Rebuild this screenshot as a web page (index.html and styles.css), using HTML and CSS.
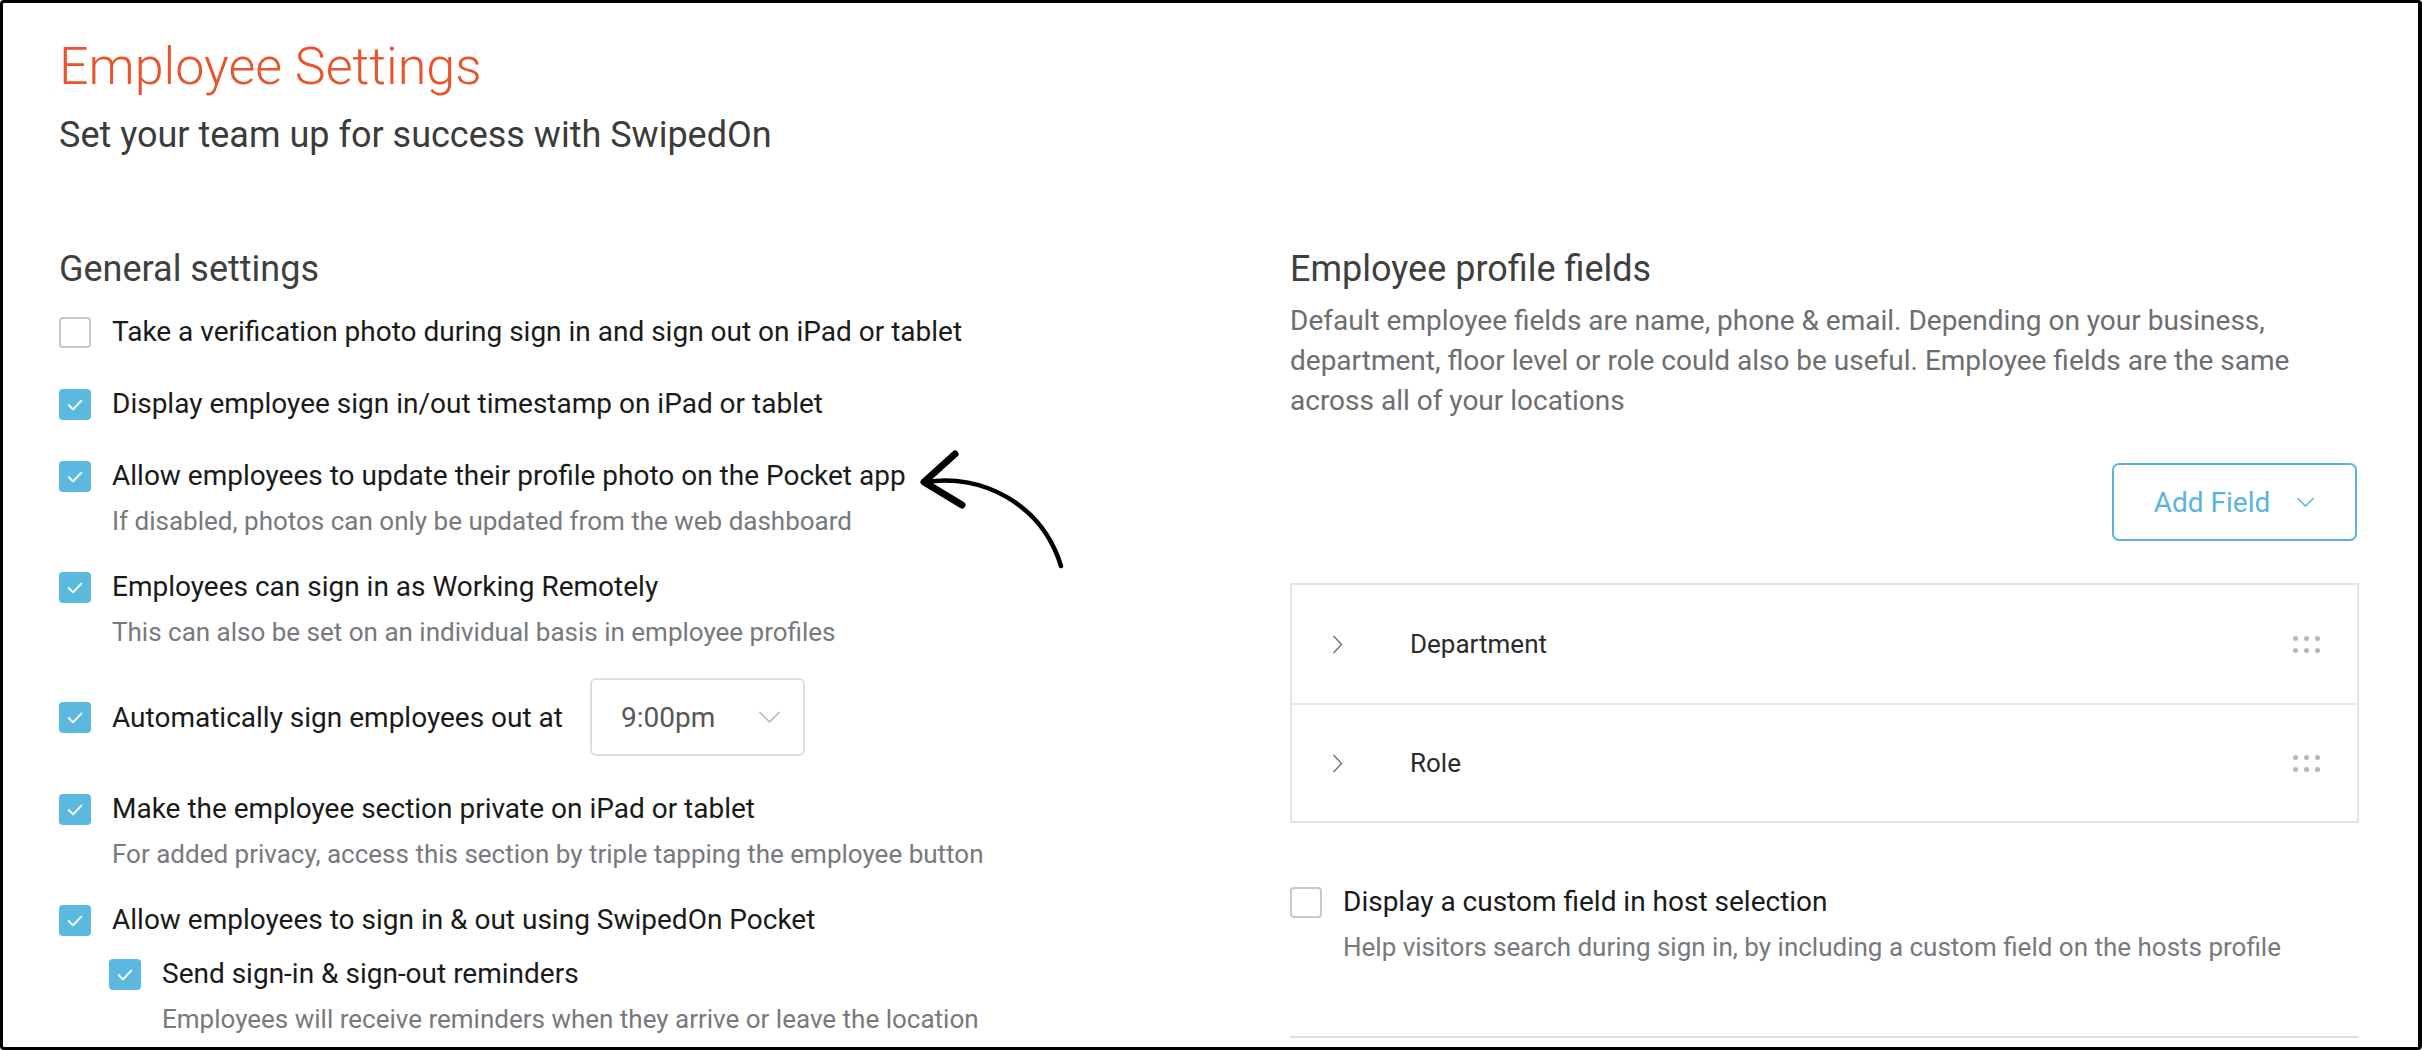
FILE: index.html
```html
<!DOCTYPE html>
<html lang="en">
<head>
<meta charset="utf-8">
<title>Employee Settings</title>
<link rel="stylesheet" href="styles.css">
</head>
<body>
<div class="frame">
  <header class="page-head">
    <h1 class="title">Employee Settings</h1>
    <p class="subtitle">Set your team up for success with SwipedOn</p>
  </header>

  <div class="columns">
    <section class="col-left">
      <h2 class="section-title">General settings</h2>
      <ul class="settings">
        <li class="setting">
          <div class="setting-row"><span class="cb"></span><span class="label">Take a verification photo during sign in and sign out on iPad or tablet</span></div>
        </li>
        <li class="setting">
          <div class="setting-row"><span class="cb checked"><svg viewBox="0 0 32 32"><polyline points="9.5,16.5 14,21 22.5,12"/></svg></span><span class="label">Display employee sign in/out timestamp on iPad or tablet</span></div>
        </li>
        <li class="setting">
          <div class="setting-row"><span class="cb checked"><svg viewBox="0 0 32 32"><polyline points="9.5,16.5 14,21 22.5,12"/></svg></span><span class="label">Allow employees to update their profile photo on the Pocket app</span></div>
          <p class="desc">If disabled, photos can only be updated from the web dashboard</p>
        </li>
        <li class="setting">
          <div class="setting-row"><span class="cb checked"><svg viewBox="0 0 32 32"><polyline points="9.5,16.5 14,21 22.5,12"/></svg></span><span class="label">Employees can sign in as Working Remotely</span></div>
          <p class="desc">This can also be set on an individual basis in employee profiles</p>
        </li>
        <li class="setting">
          <div class="setting-row"><span class="cb checked"><svg viewBox="0 0 32 32"><polyline points="9.5,16.5 14,21 22.5,12"/></svg></span><span class="label">Automatically sign employees out at</span>
            <div class="select"><span class="select-value">9:00pm</span><svg class="select-chev" viewBox="0 0 24 13"><polyline points="1,1 12,12 23,1"/></svg></div>
          </div>
        </li>
        <li class="setting">
          <div class="setting-row"><span class="cb checked"><svg viewBox="0 0 32 32"><polyline points="9.5,16.5 14,21 22.5,12"/></svg></span><span class="label">Make the employee section private on iPad or tablet</span></div>
          <p class="desc">For added privacy, access this section by triple tapping the employee button</p>
        </li>
        <li class="setting">
          <div class="setting-row"><span class="cb checked"><svg viewBox="0 0 32 32"><polyline points="9.5,16.5 14,21 22.5,12"/></svg></span><span class="label">Allow employees to sign in &amp; out using SwipedOn Pocket</span></div>
          <ul class="settings nested">
            <li class="setting">
              <div class="setting-row"><span class="cb checked"><svg viewBox="0 0 32 32"><polyline points="9.5,16.5 14,21 22.5,12"/></svg></span><span class="label">Send sign-in &amp; sign-out reminders</span></div>
              <p class="desc">Employees will receive reminders when they arrive or leave the location</p>
            </li>
          </ul>
        </li>
      </ul>
    </section>

    <section class="col-right">
      <h2 class="section-title">Employee profile fields</h2>
      <p class="intro">Default employee fields are name, phone &amp; email. Depending on your business, department, floor level or role could also be useful. Employee fields are the same across all of your locations</p>
      <button class="add-btn" type="button"><span>Add Field</span><svg class="add-chev" viewBox="0 0 20 11"><polyline points="1,1 10,10 19,1"/></svg></button>

      <ul class="fields">
        <li class="field">
          <svg class="field-chev" viewBox="0 0 11 19"><polyline points="1.5,1 9.5,9.5 1.5,18"/></svg>
          <span class="field-name">Department</span>
          <span class="drag"><i></i><i></i><i></i><i></i><i></i><i></i></span>
        </li>
        <li class="field">
          <svg class="field-chev" viewBox="0 0 11 19"><polyline points="1.5,1 9.5,9.5 1.5,18"/></svg>
          <span class="field-name">Role</span>
          <span class="drag"><i></i><i></i><i></i><i></i><i></i><i></i></span>
        </li>
      </ul>

      <div class="setting host-setting">
        <div class="setting-row"><span class="cb"></span><span class="label">Display a custom field in host selection</span></div>
        <p class="desc">Help visitors search during sign in, by including a custom field on the hosts profile</p>
      </div>
      <hr class="rule">
    </section>
  </div>

  <svg class="annotation" viewBox="0 0 180 140" aria-hidden="true">
    <path class="arrow-shaft" d="M26 42 C 82 33, 142 64, 161 126"/>
    <path class="arrow-head" d="M55 14 L 24 42 L 62 65"/>
  </svg>
</div>
</body>
</html>
```

FILE: styles.css
```css
* { box-sizing: border-box; }

html, body {
  margin: 0;
  padding: 0;
  background: #ffffff;
}

body {
  font-family: "Roboto", "Liberation Sans", sans-serif;
  color: #1d1d1d;
}

.frame {
  position: relative;
  width: 2422px;
  height: 1050px;
  border: 3px solid #000;
  border-right-width: 4px;
  border-radius: 4px;
  padding: 33px 59px 0 56px;
  overflow: hidden;
  background: #fff;
}

.page-head { display: flex; flex-direction: column; }

.title {
  margin: 0;
  font-weight: 300;
  font-size: 52px;
  line-height: 62px;
  color: #e8542c;
}

.subtitle {
  margin: 15px 0 0;
  font-size: 36px;
  line-height: 44px;
  color: #3b3b3b;
}

.columns {
  margin-top: 90px;
  display: grid;
  grid-template-columns: 1231px 1069px;
}

.section-title {
  margin: 0;
  font-weight: 400;
  font-size: 36px;
  line-height: 44px;
  color: #3f3f3f;
}

.settings {
  list-style: none;
  margin: 20px 0 0;
  padding: 0;
  display: flex;
  flex-direction: column;
  gap: 30px;
}

.settings.nested {
  margin-top: 12px;
  padding-left: 50px;
}

.setting-row {
  display: flex;
  align-items: center;
  min-height: 42px;
}

.cb {
  flex: none;
  width: 32px;
  height: 31px;
  border: 2px solid #c4c8cf;
  border-radius: 4px;
  background: #fff;
  margin-right: 21px;
}

.cb.checked {
  border: none;
  background: #5bb9df;
}

.cb svg {
  display: block;
  width: 32px;
  height: 31px;
  fill: none;
  stroke: #fff;
  stroke-width: 2;
  stroke-linecap: round;
  stroke-linejoin: round;
}

.label {
  font-size: 28px;
  line-height: 42px;
  color: #1a1a1a;
}

.desc {
  margin: 9px 0 0;
  padding-left: 53px;
  font-size: 26px;
  line-height: 30px;
  color: #77797d;
}

.select {
  margin: 1px 0 2px 27px;
  width: 215px;
  height: 78px;
  border: 2px solid #dddee3;
  border-radius: 6px;
  display: flex;
  align-items: center;
  justify-content: space-between;
  padding: 0 22px 0 29px;
}

.select-value {
  font-size: 28px;
  color: #555759;
}

.select-chev {
  width: 23px;
  height: 12px;
  fill: none;
  stroke: #b3b5b9;
  stroke-width: 1.5;
}

/* right column */
.col-right {
  display: flex;
  flex-direction: column;
}

.intro {
  margin: 10px 0 0;
  max-width: 1040px;
  font-size: 28px;
  line-height: 40px;
  color: #6c6e72;
}

.add-btn {
  align-self: flex-end;
  margin: 42px 2px 0 0;
  width: 245px;
  height: 78px;
  border: 2px solid #5ab4dc;
  border-radius: 7px;
  background: #fff;
  display: flex;
  align-items: center;
  justify-content: center;
  gap: 26px;
  font-family: inherit;
  font-size: 28px;
  color: #5ab4dc;
  padding: 0;
}

.add-chev {
  width: 19px;
  height: 10px;
  fill: none;
  stroke: #5ab4dc;
  stroke-width: 1.6;
}

.fields {
  list-style: none;
  margin: 42px 0 0;
  padding: 0;
  border: 2px solid #e1e4e9;
}

.field {
  height: 118px;
  display: flex;
  align-items: center;
  padding: 0 37px 0 40px;
}

.field + .field {
  border-top: 2px solid #e8e9ee;
}

.field-chev {
  width: 11px;
  height: 19px;
  fill: none;
  stroke: #6f7176;
  stroke-width: 1.4;
  margin-right: 67px;
}

.field-name {
  flex: 1;
  font-size: 26px;
  color: #2b2b2b;
}

.drag {
  display: grid;
  grid-template-columns: repeat(3, 5px);
  gap: 7px 6px;
}

.drag i {
  display: block;
  width: 5px;
  height: 5px;
  border-radius: 50%;
  background: #b4b7bb;
}

.host-setting {
  margin-top: 58px;
}

.rule {
  margin: 74px 0 0;
  border: none;
  height: 2px;
  background: #dcdfe4;
}

/* hand-drawn annotation arrow */
.annotation {
  position: absolute;
  left: 897px;
  top: 437px;
  width: 180px;
  height: 140px;
  overflow: visible;
}

.arrow-shaft {
  fill: none;
  stroke: #000;
  stroke-width: 4.5;
  stroke-linecap: round;
}

.arrow-head {
  fill: none;
  stroke: #000;
  stroke-width: 7;
  stroke-linecap: round;
  stroke-linejoin: round;
}
```
